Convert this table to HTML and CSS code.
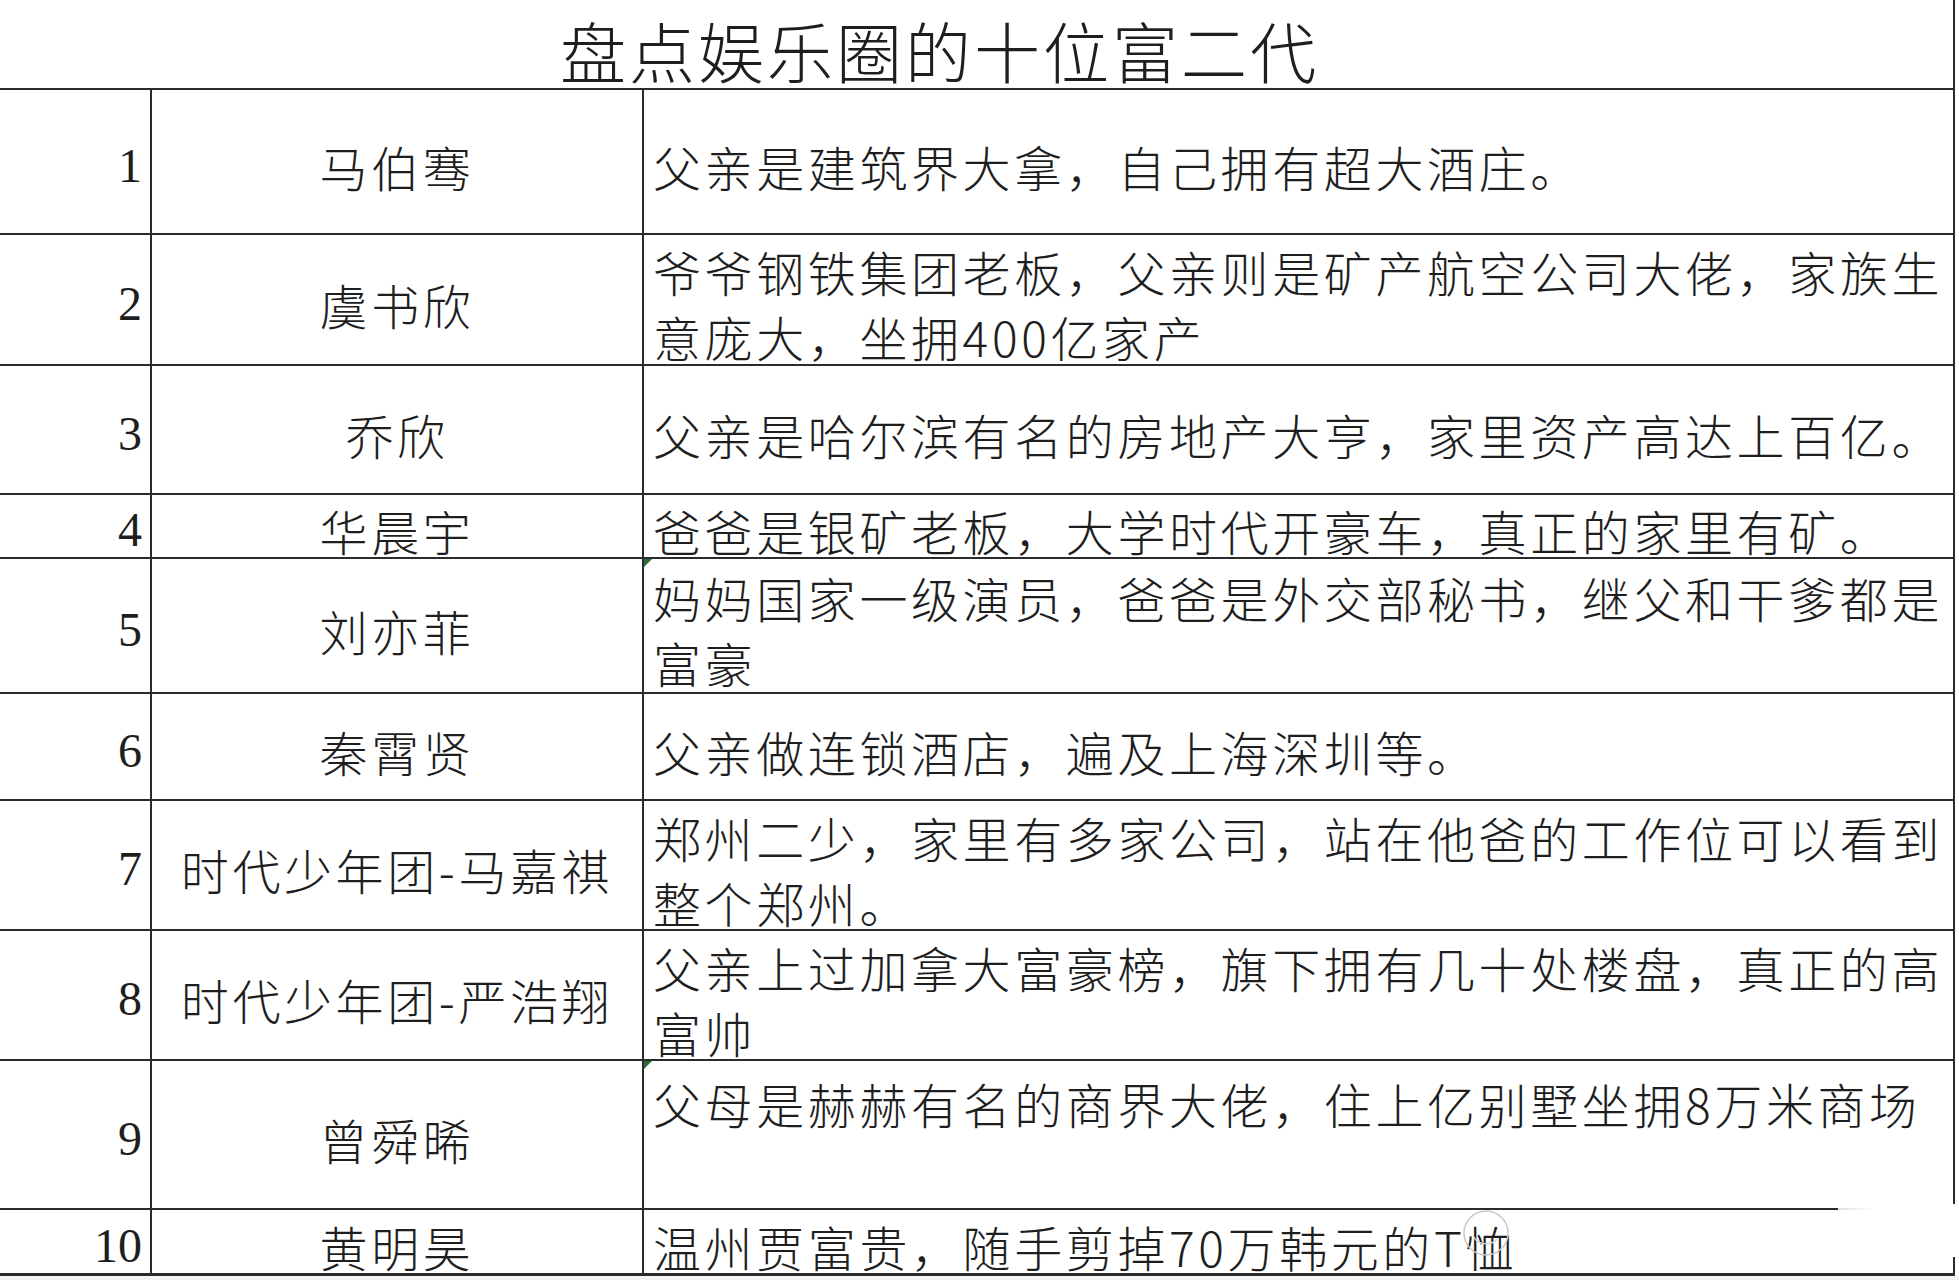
FILE: index.html
```html
<!DOCTYPE html>
<html lang="zh-CN">
<head>
<meta charset="utf-8">
<title>盘点娱乐圈的十位富二代</title>
<link rel="stylesheet" href="styles.css">
</head>
<body>
<div class="page">
  <div class="title"><span class="title-text">盘点娱乐圈的十位富二代</span></div>
  <div class="sheet">
    <div class="cell num">1</div>
    <div class="cell name">马伯骞</div>
    <div class="cell desc">父亲是建筑界大拿，自己拥有超大酒庄。</div>

    <div class="cell num">2</div>
    <div class="cell name">虞书欣</div>
    <div class="cell desc"><div class="lines"><span class="line">爷爷钢铁集团老板，父亲则是矿产航空公司大佬，家族生</span><span class="line">意庞大，坐拥400亿家产</span></div></div>

    <div class="cell num">3</div>
    <div class="cell name">乔欣</div>
    <div class="cell desc">父亲是哈尔滨有名的房地产大亨，家里资产高达上百亿。</div>

    <div class="cell num">4</div>
    <div class="cell name">华晨宇</div>
    <div class="cell desc">爸爸是银矿老板，大学时代开豪车，真正的家里有矿。</div>

    <div class="cell num">5</div>
    <div class="cell name">刘亦菲</div>
    <div class="cell desc flag"><div class="lines"><span class="line">妈妈国家一级演员，爸爸是外交部秘书，继父和干爹都是</span><span class="line">富豪</span></div></div>

    <div class="cell num">6</div>
    <div class="cell name">秦霄贤</div>
    <div class="cell desc">父亲做连锁酒店，遍及上海深圳等。</div>

    <div class="cell num">7</div>
    <div class="cell name">时代少年团-马嘉祺</div>
    <div class="cell desc"><div class="lines"><span class="line">郑州二少，家里有多家公司，站在他爸的工作位可以看到</span><span class="line">整个郑州。</span></div></div>

    <div class="cell num">8</div>
    <div class="cell name">时代少年团-严浩翔</div>
    <div class="cell desc"><div class="lines"><span class="line">父亲上过加拿大富豪榜，旗下拥有几十处楼盘，真正的高</span><span class="line">富帅</span></div></div>

    <div class="cell num">9</div>
    <div class="cell name">曾舜晞</div>
    <div class="cell desc flag top">父母是赫赫有名的商界大佬，住上亿别墅坐拥8万米商场</div>

    <div class="cell num">10</div>
    <div class="cell name">黄明昊</div>
    <div class="cell desc last">温州贾富贵，随手剪掉70万韩元的T恤</div>
  </div>
  <div class="watermark"></div>
  <svg class="wm-logo" width="52" height="52" viewBox="0 0 52 52" aria-hidden="true">
    <circle cx="26" cy="26" r="22" fill="none" stroke="#c9c9c9" stroke-width="1.5"/>
    <path d="M14 30c3 8 18 9 23 2" fill="none" stroke="#d4d4d4" stroke-width="1.5"/>
  </svg>
</div>
</body>
</html>
```

FILE: styles.css
```css
html, body {
  margin: 0;
  padding: 0;
  background: #f4f4f4;
}

.page {
  position: relative;
  width: 1959px;
  height: 1276px;
  background: #ffffff;
  color: #1e1e1e;
  font-family: "Noto Sans CJK SC", "Noto Sans", sans-serif;
  font-weight: 300;
}

.title {
  box-sizing: border-box;
  width: 1955px;
  height: 88px;
  border-right: 2px solid #2b2b2b;
  padding-left: 560px;
  display: flex;
  align-items: center;
}

.title-text {
  font-size: 66px;
  letter-spacing: 3px;
  line-height: 1;
  white-space: nowrap;
  margin-top: 10px;
}

.sheet {
  display: grid;
  width: 1955px;
  grid-template-columns: 152px 492px 1311px;
  grid-template-rows: 145px 131px 129px 64px 135px 107px 130px 130px 149px 65px;
  border-top: 2px solid #2b2b2b;
  border-bottom: 1px solid #2b2b2b;
}

.cell {
  position: relative;
  box-sizing: border-box;
  border-right: 2px solid #2b2b2b;
  border-bottom: 2px solid #2b2b2b;
  display: flex;
  align-items: center;
  padding-top: 8px;
  white-space: nowrap;
}

.num {
  justify-content: flex-end;
  padding-right: 8px;
  font-family: "Liberation Serif", "Times New Roman", serif;
  font-weight: 400;
  font-size: 48px;
  line-height: 1;
}

.name {
  justify-content: center;
  font-size: 48px;
  letter-spacing: 3.6px;
  line-height: 1;
}

.desc {
  padding-left: 9px;
  font-size: 48px;
  letter-spacing: 3.6px;
  line-height: 1;
}

.lines {
  display: flex;
  flex-direction: column;
  gap: 17px;
}

.line {
  display: block;
  line-height: 1;
}

.desc.top {
  align-items: flex-start;
  padding-top: 18px;
}

.desc.flag::before {
  content: "";
  position: absolute;
  left: 0;
  top: 0;
  width: 0;
  height: 0;
  border-top: 8px solid #2f6a3c;
  border-right: 8px solid transparent;
}

.watermark {
  position: absolute;
  left: 1838px;
  top: 1204px;
  width: 121px;
  height: 53px;
  background: linear-gradient(to right, rgba(255,255,255,0.85), #ffffff 30%);
}

.wm-logo {
  position: absolute;
  left: 1460px;
  top: 1207px;
}
```
